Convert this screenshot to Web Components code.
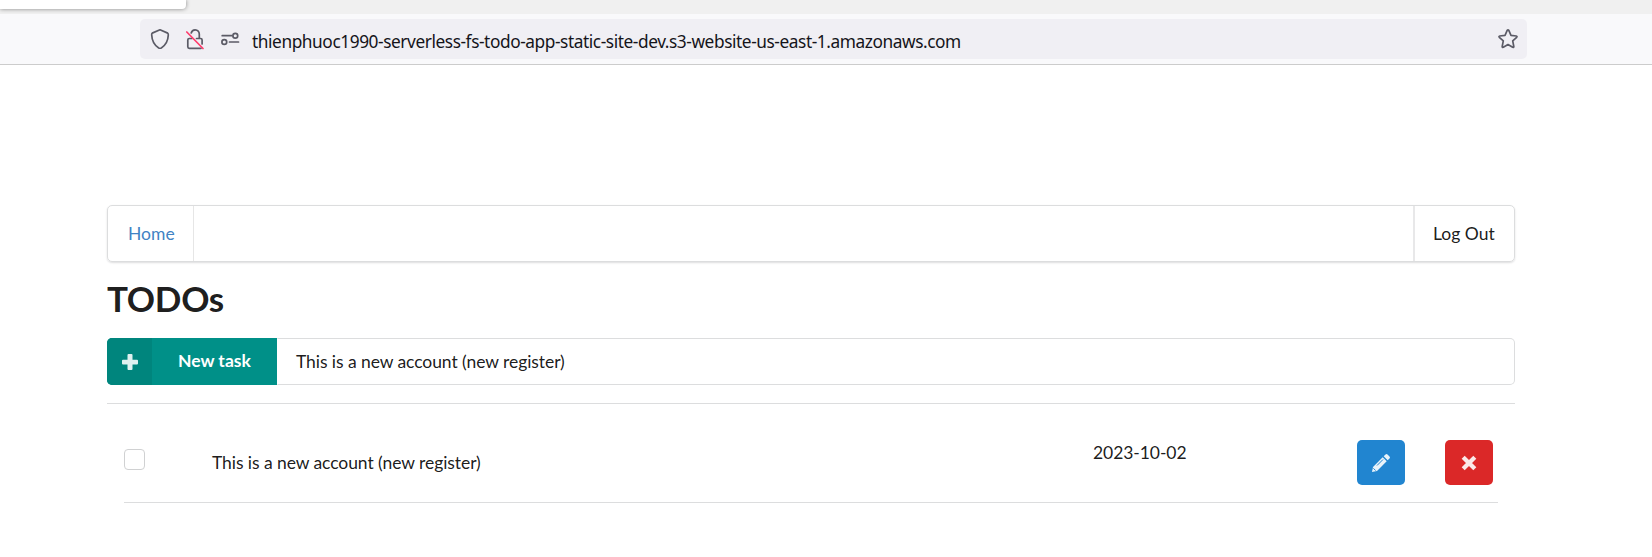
<!DOCTYPE html>
<html lang="en"><head><meta charset="utf-8"><title>TODOs</title>
<style>body{margin:0;background:#fff;overflow:hidden;font:17.5px/25px Lato,"Liberation Sans",sans-serif;color:rgba(0,0,0,.9)}</style></head>
<body>
<browser-chrome>thienphuoc1990-serverless-fs-todo-app-static-site-dev.s3-website-us-east-1.amazonaws.com</browser-chrome>
<todo-page></todo-page>
<script>
const define=(name,html)=>customElements.define(name,class extends HTMLElement{
  constructor(){super();const t=document.createElement('template');t.innerHTML=html;this.attachShadow({mode:'open'}).append(t.content.cloneNode(true));}
});
define('browser-chrome',`<style>
:host{display:block;height:65px;box-sizing:border-box;border-bottom:1px solid #ccc;background:#f9f9fb}
.tabs{height:14px;background:#f0f0f0;overflow:hidden}
.tab{width:186px;height:9px;background:#fff;border-radius:0 0 4px 0;box-shadow:0 0 4px rgba(0,0,0,.45)}
.url{margin:5px 125px 0 140px;height:40px;border-radius:5px;background:#f0eff4;display:flex;align-items:center;box-sizing:border-box;padding:0 9px 0 10px}
svg{flex:none;fill:none;stroke:#5b5b66;stroke-width:1.7;stroke-linecap:round;stroke-linejoin:round}
.text{flex:1;margin-left:11px;font:17.3px/38px "Noto Sans","Open Sans",sans-serif;letter-spacing:-.43px;color:#15141a;white-space:nowrap;padding-top:4px;height:36px}
</style><div class="tabs"><div class="tab"></div></div>
<div class="url">
<svg width="20" height="22" viewBox="0 0 20 22"><path d="M10 1.8 2.2 5.1C1.6 5.5 1.6 5.6 1.7 7c.3 6.2 3 10.5 7 12.9q1.3.7 2.6 0c4-2.4 6.7-6.700 7-12.900 0-1.400 0-1.500-.6-1.900Z"/></svg>
<svg style="margin-left:15px" width="20" height="22" viewBox="0 0 20 22"><path d="M6.200 5C6.700 2.900 8.200 1.800 10.100 1.800c2.600 0 4.200 1.900 4.200 4.500v4.200M11.500 10.500h4.100q1.500 0 1.500 1.500v4M6.800 10.500H4.300q-1.500 0-1.500 1.500v6.800q0 1.500 1.500 1.500h11.700"/><path d="m1.800 4 16.200 16.500" stroke="#ff3b6b" stroke-width="1.700"/></svg>
<svg style="margin-left:16px" width="20" height="22" viewBox="0 0 20 22"><path d="M1.200 7.700h9.600M8.500 14h9"/><circle cx="14.300" cy="7.700" r="2.400"/><circle cx="3.300" cy="14" r="2.400"/></svg>
<span class="text"><slot></slot></span>
<svg width="20" height="20" viewBox="0 0 20 20"><path d="M9.200 1.400q.8-1 1.600 0l2.200 5 5.300.6q1.200.3.400 1.300l-4 3.600 1.100 5.600q0 1.200-1.100.8L10 15.500l-4.700 2.800q-1.100.4-1.100-.8l1.100-5.600-4-3.600q-.8-1 .4-1.300L7 6.400Z"/></svg>
</div>`);
define('nav-bar',`<style>
:host{display:flex;justify-content:space-between;box-sizing:border-box;height:57px;border:1px solid #dcddde;border-radius:5px;box-shadow:0 1px 2px rgba(34,36,38,.15);line-height:56px}
.home{color:#4183c4;width:86px;box-sizing:border-box;padding-left:20px;border-right:1px solid #e6e6e6}
.out{width:101px;box-sizing:border-box;padding-left:18px;border-left:2px solid #e8e8e9}
</style><div class="home">Home</div><div class="out">Log Out</div>`);
define('task-input',`<style>
:host{display:flex;height:47px;line-height:46px}
.b{width:170px;display:flex;background:#009088;color:#fff;font-weight:700;border-radius:5px 0 0 5px;overflow:hidden}
.i{width:45px;background:#00857d;display:flex;align-items:center;justify-content:center}
.l{padding-left:26px}
.f{flex:1;box-sizing:border-box;border:1px solid #dcddde;border-left-color:transparent;border-radius:0 5px 5px 0;padding-left:18px;line-height:45px;letter-spacing:-.07px}
</style><div class="b"><div class="i"><svg width="18" height="18"><path fill="#e0f1f0" d="M7.500 1h3q1 0 1 1v4.700H16q1 0 1 1v2.800q0 1-1 1h-4.500V16q0 1-1 1h-3q-1 0-1-1v-4.500H2q-1 0-1-1V7.700q0-1 1-1h4.500V2q0-1 1-1Z"/></svg></div><span class="l">New task</span></div><div class="f">This is a new account (new register)</div>`);
define('icon-button',`<style>
:host{display:flex;width:48px;height:45px;border-radius:5px;align-items:center;justify-content:center}
</style><slot></slot>`);
define('todo-item',`<style>
:host{display:flex;align-items:flex-start;box-sizing:border-box;height:99px;margin:0 17px;padding-top:36px;border-bottom:1px solid #dcddde;letter-spacing:-.07px}
.c{width:21px;height:21px;box-sizing:border-box;border:1px solid #d0d1d2;border-radius:4px;margin-top:9px}
.t{margin:10px 0 0 67px;width:881px}.d{width:264px}
icon-button{margin-right:40px}.x{margin-right:0}
svg{display:block}
</style><div class="c"></div><div class="t">This is a new account (new register)</div><div class="d">2023-10-02</div>
<icon-button style="background:#2185d0"><svg width="20" height="20" viewBox="0 0 20 20"><g fill="#e9f3fa"><path d="m11.700 4.300 4 4-9.700 9.700L1 19l1-5Z"/><path d="m12.700 3.300 1.800-1.800q1-1 2 0l2 2q1 1 0 2l-1.800 1.800Z"/></g><path d="m6 12.500 6-6M2.400 15.300l2.300 2.300" fill="none" stroke="#2185d0" stroke-width="1"/></svg></icon-button>
<icon-button class="x" style="background:#db2828"><svg width="16" height="16" viewBox="0 0 16 16"><path d="m3.700 3.700 8.600 8.600m0-8.600-8.600 8.600" stroke="#fbe9e9" stroke-width="4.300" stroke-linecap="square"/></svg></icon-button>`);
define('todo-page',`<style>
:host{display:block;margin:140px 137px 0 107px}
h1{font-size:35px;line-height:45px;font-weight:700;letter-spacing:-.3px;margin:14px 0 17px}
.r{height:1px;background:#dcddde;margin-top:18px}
</style><nav-bar></nav-bar><h1>TODOs</h1><task-input></task-input><div class="r"></div><todo-item></todo-item>`);
</script></body></html>
